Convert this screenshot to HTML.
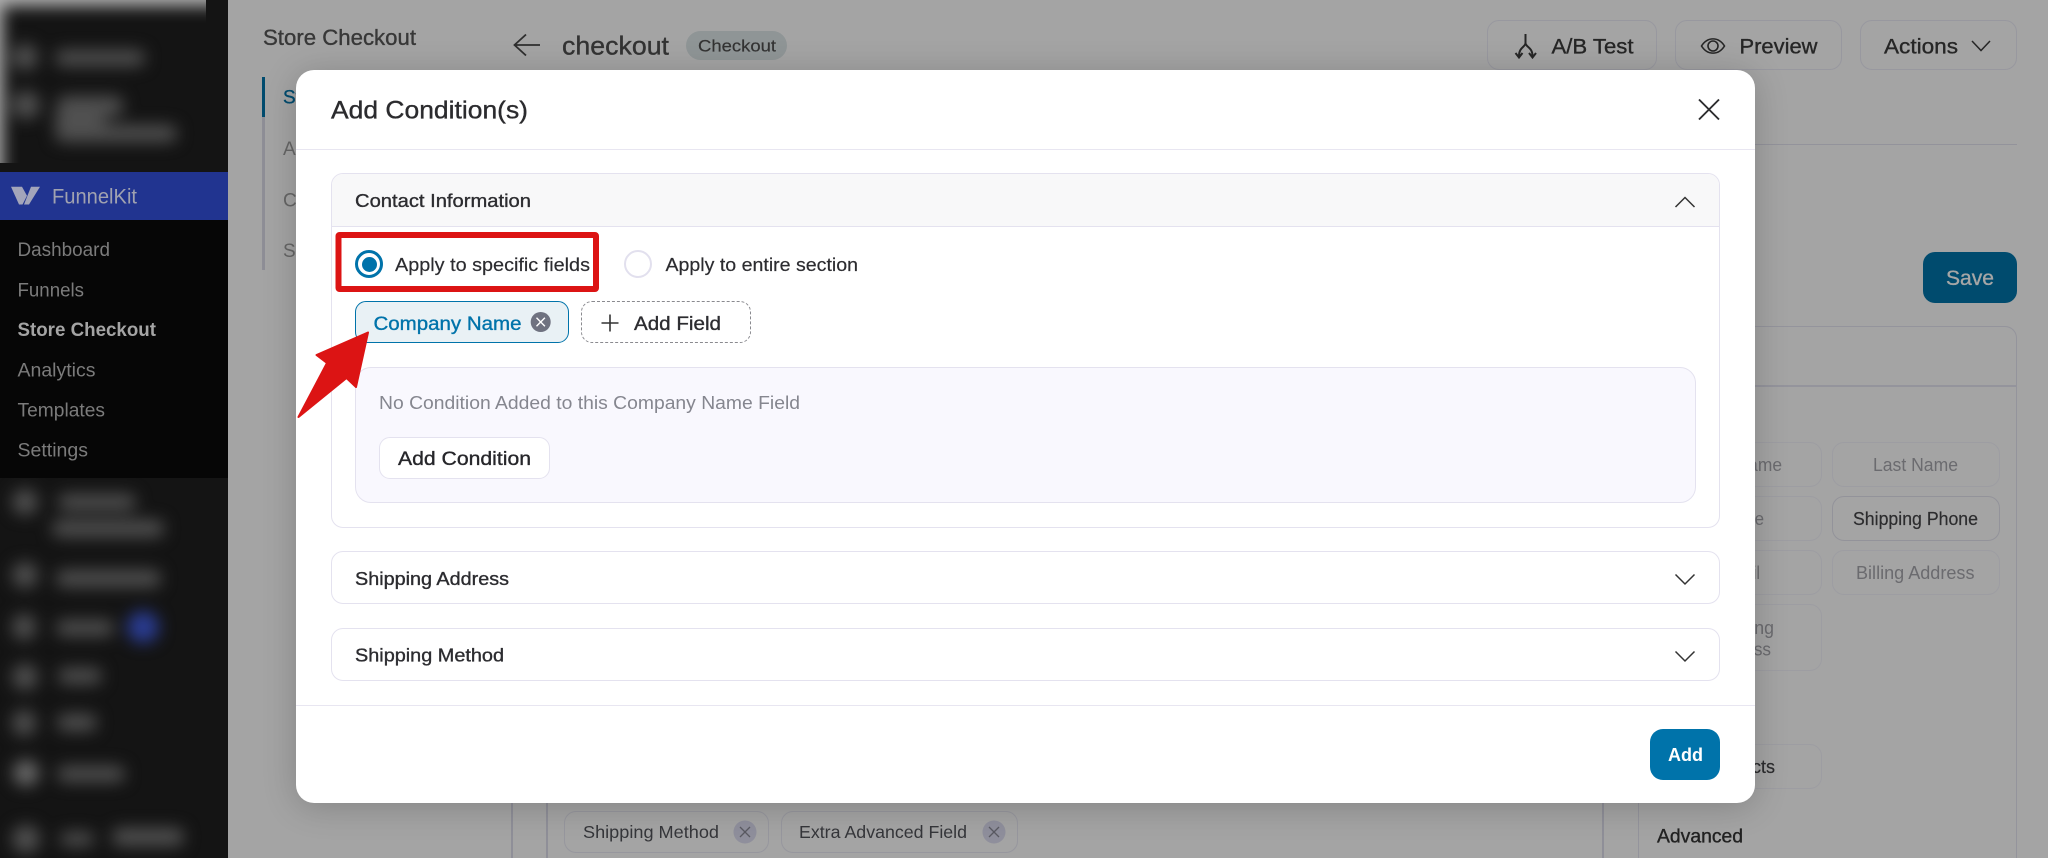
<!DOCTYPE html>
<html><head><meta charset="utf-8"><title>Add Condition(s)</title>
<style>
html,body{margin:0;padding:0;width:2048px;height:858px;overflow:hidden;background:#a4a4a4;font-family:"Liberation Sans",sans-serif}
#root{position:absolute;left:0;top:0;width:2048px;height:858px;overflow:hidden;background:#a4a4a4}
.a{position:absolute;box-sizing:border-box}
svg.a{left:0;top:0;width:2048px;height:858px}
text{font-family:"Liberation Sans",sans-serif}
.m{stroke:currentColor;stroke-width:.35px}
.l{stroke:currentColor;stroke-width:.18px}
.blob{position:absolute;background:#505050;border-radius:8px}
</style></head><body>
<div id="root">

<!-- sidebar -->
<div class="a" style="left:0;top:0;width:228px;height:858px;background:#141414"></div>
<div class="a" style="left:0;top:0;width:206px;height:163px;overflow:hidden;background:#141414">
  <div class="a" style="left:0;top:0;width:206px;height:163px;filter:blur(8px)">
    <div class="blob" style="left:-30px;top:-30px;width:280px;height:36px;background:#b4b4b4;border-radius:0"></div>
    <div class="blob" style="left:-30px;top:-30px;width:33px;height:220px;background:#b0b0b0;border-radius:0"></div>
    <div class="blob" style="left:12px;top:44px;width:26px;height:26px;border-radius:50%"></div>
    <div class="blob" style="left:55px;top:50px;width:90px;height:16px"></div>
    <div class="blob" style="left:12px;top:91px;width:28px;height:28px;border-radius:50%"></div>
    <div class="blob" style="left:57px;top:96px;width:66px;height:20px"></div>
    <div class="blob" style="left:55px;top:110px;width:50px;height:20px"></div>
    <div class="blob" style="left:55px;top:125px;width:122px;height:17px"></div>
  </div>
</div>
<div class="a" style="left:0;top:478px;width:228px;height:380px;overflow:hidden;background:#141414">
  <div class="a" style="left:0;top:0;width:228px;height:380px;filter:blur(8px)">
    <div class="blob" style="left:12px;top:11px;width:26px;height:26px;border-radius:50%"></div>
    <div class="blob" style="left:58px;top:16px;width:78px;height:16px"></div>
    <div class="blob" style="left:52px;top:42px;width:112px;height:17px"></div>
    <div class="blob" style="left:12px;top:84px;width:26px;height:26px;border-radius:50%"></div>
    <div class="blob" style="left:56px;top:92px;width:105px;height:17px"></div>
    <div class="blob" style="left:12px;top:136px;width:24px;height:26px;border-radius:50%"></div>
    <div class="blob" style="left:56px;top:142px;width:58px;height:16px"></div>
    <div class="blob" style="left:127px;top:133px;width:32px;height:32px;border-radius:50%;background:#2a3c92"></div>
    <div class="blob" style="left:12px;top:186px;width:26px;height:26px;border-radius:50%"></div>
    <div class="blob" style="left:58px;top:190px;width:44px;height:16px"></div>
    <div class="blob" style="left:12px;top:232px;width:24px;height:26px;border-radius:50%"></div>
    <div class="blob" style="left:57px;top:236px;width:40px;height:17px"></div>
    <div class="blob" style="left:13px;top:282px;width:26px;height:26px;border-radius:50%;background:#6a6a6a"></div>
    <div class="blob" style="left:57px;top:288px;width:68px;height:16px"></div>
    <div class="blob" style="left:12px;top:347px;width:28px;height:28px;border-radius:50%"></div>
    <div class="blob" style="left:60px;top:354px;width:34px;height:14px"></div>
    <div class="blob" style="left:112px;top:350px;width:72px;height:18px"></div>
  </div>
</div>
<div class="a" style="left:0;top:172px;width:228px;height:48px;background:#213490"></div>
<div class="a" style="left:0;top:220px;width:228px;height:258px;background:#060606"></div>

<!-- page behind overlay -->
<div class="a" style="left:262px;top:77px;width:3px;height:193px;background:#8e8e96"></div>
<div class="a" style="left:262px;top:77px;width:3px;height:40px;background:#004b6e"></div>

<div class="a" style="left:686px;top:31px;width:101px;height:29px;border-radius:15px;background:#8f9596"></div>
<div class="a" style="left:1487px;top:20px;width:170px;height:50px;border:1.5px solid #98989f;border-radius:12px"></div>
<div class="a" style="left:1675px;top:20px;width:167px;height:50px;border:1.5px solid #98989f;border-radius:12px"></div>
<div class="a" style="left:1860px;top:20px;width:157px;height:50px;border:1.5px solid #98989f;border-radius:12px"></div>
<div class="a" style="left:1700px;top:144px;width:317px;height:1px;background:#93939b"></div>
<div class="a" style="left:1923px;top:252px;width:94px;height:51px;border-radius:12px;background:#004b6e"></div>

<div class="a" style="left:1638px;top:326px;width:379px;height:532px;border:1.5px solid #94949c;border-bottom:none;border-radius:12px 12px 0 0"></div>
<div class="a" style="left:1638px;top:385px;width:379px;height:1.5px;background:#94949c"></div>
<div class="a" style="left:1657px;top:442px;width:165px;height:45px;border:1.5px solid #9d9da2;border-radius:12px"></div>
<div class="a" style="left:1832px;top:442px;width:168px;height:45px;border:1.5px solid #9d9da2;border-radius:12px"></div>
<div class="a" style="left:1657px;top:496px;width:165px;height:45px;border:1.5px solid #9d9da2;border-radius:12px"></div>
<div class="a" style="left:1832px;top:496px;width:168px;height:45px;border:1.5px solid #93939a;border-radius:12px"></div>
<div class="a" style="left:1657px;top:550px;width:165px;height:45px;border:1.5px solid #9d9da2;border-radius:12px"></div>
<div class="a" style="left:1832px;top:550px;width:168px;height:45px;border:1.5px solid #9d9da2;border-radius:12px"></div>
<div class="a" style="left:1657px;top:604px;width:165px;height:67px;border:1.5px solid #9d9da2;border-radius:12px"></div>
<div class="a" style="left:1657px;top:744px;width:165px;height:45px;border:1.5px solid #9d9da2;border-radius:12px"></div>

<div class="a" style="left:511px;top:700px;width:1.5px;height:158px;background:#8f8f98"></div>
<div class="a" style="left:546px;top:700px;width:1.5px;height:158px;background:#8f8f98"></div>
<div class="a" style="left:1602px;top:700px;width:1.5px;height:158px;background:#8f8f98"></div>
<div class="a" style="left:564px;top:811px;width:205px;height:42px;border:1.5px solid #97979e;border-radius:12px"></div>
<div class="a" style="left:781px;top:811px;width:237px;height:42px;border:1.5px solid #97979e;border-radius:12px"></div>

<svg class="a" viewBox="0 0 2048 858" xmlns="http://www.w3.org/2000/svg">
  <!-- logo -->
  <path d="M11 186.700h11l5 9-4.500 8.800h-3.500zM31 186.700h9l-11 17.800h-5z" fill="#a3a5ba"/>
  <text x="52" y="203.500" font-size="21" fill="#a0a2b0" textLength="85" lengthAdjust="spacingAndGlyphs">FunnelKit</text>
  <g fill="#7b7b7b" font-size="19">
    <text x="17.500" y="256" textLength="92.500" lengthAdjust="spacingAndGlyphs">Dashboard</text>
    <text x="17.500" y="296.500" textLength="66.500" lengthAdjust="spacingAndGlyphs">Funnels</text>
    <text x="17.500" y="376.700" textLength="78" lengthAdjust="spacingAndGlyphs">Analytics</text>
    <text x="17.500" y="416.700" textLength="87.500" lengthAdjust="spacingAndGlyphs">Templates</text>
    <text x="17.500" y="456.700" textLength="70.500" lengthAdjust="spacingAndGlyphs">Settings</text>
  </g>
  <text x="17.500" y="336" font-size="19" font-weight="700" fill="#a4a4a4" textLength="138.500" lengthAdjust="spacingAndGlyphs">Store Checkout</text>

  <text x="263" y="45" font-size="22" fill="#383838" color="#383838" class="m" textLength="153" lengthAdjust="spacingAndGlyphs">Store Checkout</text>
  <text x="283" y="103.500" font-size="19" fill="#004b6e" color="#004b6e" class="m">St</text>
  <g font-size="19" fill="#666"><text x="283" y="155">An</text><text x="283" y="206.700">Co</text><text x="283" y="257">Se</text></g>

  <path d="M540 45H515M526 34.500 514.500 45 526 55.500" fill="none" stroke="#2e2e2e" stroke-width="1.800"/>
  <text x="562" y="54.300" font-size="26" fill="#333" color="#333" class="m" textLength="107" lengthAdjust="spacingAndGlyphs">checkout</text>
  <text x="698" y="51.700" font-size="17" fill="#333" color="#333" class="l" textLength="78" lengthAdjust="spacingAndGlyphs">Checkout</text>

  <!-- A/B icon -->
  <path d="M1525.500 34V43M1525.500 43C1525.500 47 1519 47 1519 56M1525.500 43C1525.500 47 1532.500 47 1532.500 56M1515.500 53l3.500 4.500 3.500-4.500M1529 53l3.500 4.500 3.500-4.500" fill="none" stroke="#262626" stroke-width="2"/>
  <g font-size="21" fill="#262626" color="#262626">
    <text x="1551.500" y="53.300" class="m" textLength="82" lengthAdjust="spacingAndGlyphs">A/B Test</text>
    <text x="1739.500" y="53.300" class="m" textLength="78" lengthAdjust="spacingAndGlyphs">Preview</text>
    <text x="1884" y="53.300" class="m" textLength="74" lengthAdjust="spacingAndGlyphs">Actions</text>
  </g>
  <path d="M1701.500 46c6-9.500 17-9.500 23 0c-6 9.500-17 9.500-23 0z" fill="none" stroke="#262626" stroke-width="1.600"/>
  <circle cx="1713" cy="46" r="5" fill="none" stroke="#262626" stroke-width="1.600"/>
  <path d="M1972 41l9 9.500 9-9.500" fill="none" stroke="#262626" stroke-width="1.500"/>
  <text x="1946" y="285" font-size="21" fill="#a6a6a6" color="#a6a6a6" class="m" textLength="48" lengthAdjust="spacingAndGlyphs">Save</text>

  <g font-size="18" fill="#6b6b6f">
    <text x="1697" y="471" textLength="85" lengthAdjust="spacingAndGlyphs">First Name</text>
    <text x="1873" y="471" textLength="85" lengthAdjust="spacingAndGlyphs">Last Name</text>
    <text x="1715" y="525" textLength="49" lengthAdjust="spacingAndGlyphs">Phone</text>
    <text x="1719" y="579" textLength="41" lengthAdjust="spacingAndGlyphs">Email</text>
    <text x="1856" y="579" textLength="118.500" lengthAdjust="spacingAndGlyphs">Billing Address</text>
    <text x="1705" y="634" textLength="69" lengthAdjust="spacingAndGlyphs">Shipping</text>
    <text x="1708" y="655.600" textLength="63" lengthAdjust="spacingAndGlyphs">Address</text>
  </g>
  <text x="1853" y="525" font-size="18" fill="#2c2c2e" color="#2c2c2e" class="l" textLength="125" lengthAdjust="spacingAndGlyphs">Shipping Phone</text>
  <text x="1704" y="773" font-size="18" fill="#2c2c2e" color="#2c2c2e" class="l" textLength="71" lengthAdjust="spacingAndGlyphs">Products</text>
  <text x="1657" y="842.600" font-size="19" fill="#222" color="#222" class="m" textLength="86" lengthAdjust="spacingAndGlyphs">Advanced</text>

  <g font-size="17.500" fill="#35363a">
    <text x="583" y="838" textLength="136" lengthAdjust="spacingAndGlyphs">Shipping Method</text>
    <text x="799" y="838" textLength="168" lengthAdjust="spacingAndGlyphs">Extra Advanced Field</text>
  </g>
  <circle cx="745" cy="832" r="11.500" fill="#8f8f9c"/>
  <circle cx="994" cy="832" r="11.500" fill="#8f8f9c"/>
  <path d="M740 827l10 10M750 827l-10 10M989 827l10 10M999 827l-10 10" stroke="#5a5a62" stroke-width="1.300"/>
</svg>

<!-- modal -->
<div class="a" style="left:296px;top:70px;width:1459px;height:732.500px;background:#fff;border-radius:18px;box-shadow:0 4px 34px rgba(0,0,0,.2)"></div>
<div class="a" style="left:296px;top:148.500px;width:1459px;height:1.500px;background:#e8e6f1"></div>
<div class="a" style="left:296px;top:704.500px;width:1459px;height:1.500px;background:#e8e6f1"></div>

<div class="a" style="left:331px;top:173px;width:1389px;height:355px;border:1.500px solid #e4e2ef;border-radius:12px"></div>
<div class="a" style="left:332px;top:174px;width:1387px;height:53px;background:#f8f8f9;border-bottom:1.500px solid #e4e2ef;border-radius:11px 11px 0 0"></div>

<div class="a" style="left:355px;top:367px;width:1341px;height:136px;background:#f9f8fe;border:1.500px solid #e4e2ef;border-radius:16px"></div>
<div class="a" style="left:379px;top:437px;width:171px;height:42px;background:#fff;border:1.500px solid #e4e2ef;border-radius:11px"></div>

<div class="a" style="left:355px;top:250px;width:28px;height:28px;border:3px solid #0073aa;border-radius:50%"></div>
<div class="a" style="left:361.500px;top:256.500px;width:15px;height:15px;background:#0073aa;border-radius:50%"></div>
<div class="a" style="left:624px;top:250px;width:28px;height:28px;border:2.500px solid #e2e0ee;border-radius:50%"></div>

<div class="a" style="left:355px;top:301px;width:214px;height:42px;background:#e9f1f5;border:1.500px solid #0073aa;border-radius:11px"></div>
<div class="a" style="left:581px;top:301px;width:170px;height:42px;border:1.500px dashed #8a8a8f;border-radius:11px"></div>

<div class="a" style="left:331px;top:551px;width:1389px;height:53px;border:1.500px solid #e4e2ef;border-radius:12px"></div>
<div class="a" style="left:331px;top:628px;width:1389px;height:53px;border:1.500px solid #e4e2ef;border-radius:12px"></div>

<div class="a" style="left:1650px;top:729px;width:70px;height:51px;background:#0073aa;border-radius:13px"></div>

<svg class="a" viewBox="0 0 2048 858" xmlns="http://www.w3.org/2000/svg">
  <text x="331" y="118.700" font-size="25" fill="#2b2b2e" color="#2b2b2e" class="m" textLength="197" lengthAdjust="spacingAndGlyphs">Add Condition(s)</text>
  <path d="M1699 99.500l20 20M1719 99.500l-20 20" stroke="#2c2c2e" stroke-width="1.900"/>

  <text x="355" y="207" font-size="18.500" fill="#2c2c30" color="#2c2c30" class="m" textLength="176" lengthAdjust="spacingAndGlyphs">Contact Information</text>
  <path d="M1675.500 207l9.500-9.500 9.500 9.500" fill="none" stroke="#333" stroke-width="1.500"/>

  <text x="395" y="271" font-size="18.500" fill="#2c2c30" color="#2c2c30" class="l" textLength="195" lengthAdjust="spacingAndGlyphs">Apply to specific fields</text>
  <text x="665.500" y="271" font-size="18.500" fill="#2c2c30" color="#2c2c30" class="l" textLength="192.500" lengthAdjust="spacingAndGlyphs">Apply to entire section</text>

  <text x="373.500" y="330" font-size="19" fill="#0073aa" color="#0073aa" class="m" textLength="148" lengthAdjust="spacingAndGlyphs">Company Name</text>
  <circle cx="540.700" cy="322" r="10" fill="#6f7280"/>
  <path d="M536.500 317.800l8.400 8.400M544.900 317.800l-8.400 8.400" stroke="#fff" stroke-width="1.400"/>

  <path d="M610 314.500v17M601.500 323h17" stroke="#333" stroke-width="1.600"/>
  <text x="634" y="330" font-size="19.500" fill="#2c2c30" color="#2c2c30" class="m" textLength="87" lengthAdjust="spacingAndGlyphs">Add Field</text>

  <text x="379" y="409" font-size="18" fill="#85868f" textLength="421" lengthAdjust="spacingAndGlyphs">No Condition Added to this Company Name Field</text>
  <text x="398" y="465" font-size="19.500" fill="#26262a" color="#26262a" class="m" textLength="133" lengthAdjust="spacingAndGlyphs">Add Condition</text>

  <text x="355" y="585" font-size="18.500" fill="#2c2c30" color="#2c2c30" class="m" textLength="154" lengthAdjust="spacingAndGlyphs">Shipping Address</text>
  <text x="355" y="661.700" font-size="18.500" fill="#2c2c30" color="#2c2c30" class="m" textLength="149" lengthAdjust="spacingAndGlyphs">Shipping Method</text>
  <path d="M1675.500 574.500l9.500 9.500 9.500-9.500M1675.500 651.500l9.500 9.500 9.500-9.500" fill="none" stroke="#333" stroke-width="1.500"/>

  <text x="1668" y="761" font-size="18" font-weight="700" fill="#fff" textLength="35" lengthAdjust="spacingAndGlyphs">Add</text>

  <rect x="338.500" y="235" width="257.500" height="54" rx="1" fill="none" stroke="#dc1414" stroke-width="6"/>
  <path d="M368 332.500L316.500 355L327 363L298.500 417L346.500 378L356 387Z" fill="#dc1414" stroke="#dc1414" stroke-width="2" stroke-linejoin="round"/>
</svg>
</div>
</body></html>
